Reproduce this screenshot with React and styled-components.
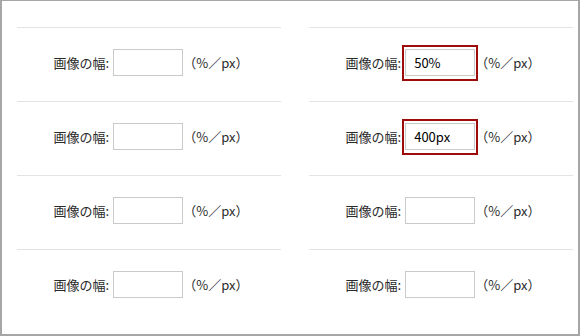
import React from 'react';
import styled, { createGlobalStyle } from 'styled-components';

const Global = createGlobalStyle`
  html, body {
    margin: 0;
    padding: 0;
    background: #fff;
  }
  body {
    font-family: "Noto Sans CJK JP", "Noto Sans", sans-serif;
  }
`;

const Frame = styled.div`
  box-sizing: border-box;
  width: 580px;
  height: 336px;
  background: #fff;
  border-style: solid;
  border-color: #a6a6a6;
  border-width: 1px 2px 2px 2px;
  padding: 26px 5px 0 15px;
`;

const Grid = styled.div`
  display: grid;
  grid-template-columns: 264px 264px;
  column-gap: 28px;
`;

const Cell = styled.div`
  box-sizing: border-box;
  height: 74px;
  border-top: 1px solid #e3e3e3;
  padding: 0 0 4px 4px;
  display: flex;
  align-items: center;
  justify-content: center;
  font-size: 13px;
  color: #2a2a2a;
  white-space: nowrap;
`;

const Label = styled.span`
  margin-right: 4px;
`;

const Outline = styled.span`
  display: inline-flex;
  margin: 0 -3px;
  padding: ${p => (p.$on ? '2px 1px 3px 1px' : '0')};
  border: ${p => (p.$on ? '2px solid #9e0b0b' : 'none')};
`;

const Field = styled.input`
  box-sizing: border-box;
  width: 70px;
  height: 27px;
  margin: 0;
  padding: 0 8px;
  border: 1px solid #cacaca;
  border-radius: 0;
  background: #fff;
  font-family: "Noto Sans CJK JP", "Noto Sans", sans-serif;
  font-size: 13px;
  color: #000;
  outline: none;
`;

const Unit = styled.span`
  margin-left: 0;
`;

const Item = ({ value }) => (
  <Cell>
    <Label>画像の幅:</Label>
    {value ? (
      <Outline $on>
        <Field defaultValue={value} />
      </Outline>
    ) : (
      <Field defaultValue="" />
    )}
    <Unit>（%／px）</Unit>
  </Cell>
);

const rows = [
  ['', '50%'],
  ['', '400px'],
  ['', ''],
  ['', ''],
];

const App = () => (
  <>
    <Global />
    <Frame>
      <Grid>
        {rows.map((r, i) => (
          <React.Fragment key={i}>
            <Item value={r[0]} />
            <Item value={r[1]} />
          </React.Fragment>
        ))}
      </Grid>
    </Frame>
  </>
);

export default App;
